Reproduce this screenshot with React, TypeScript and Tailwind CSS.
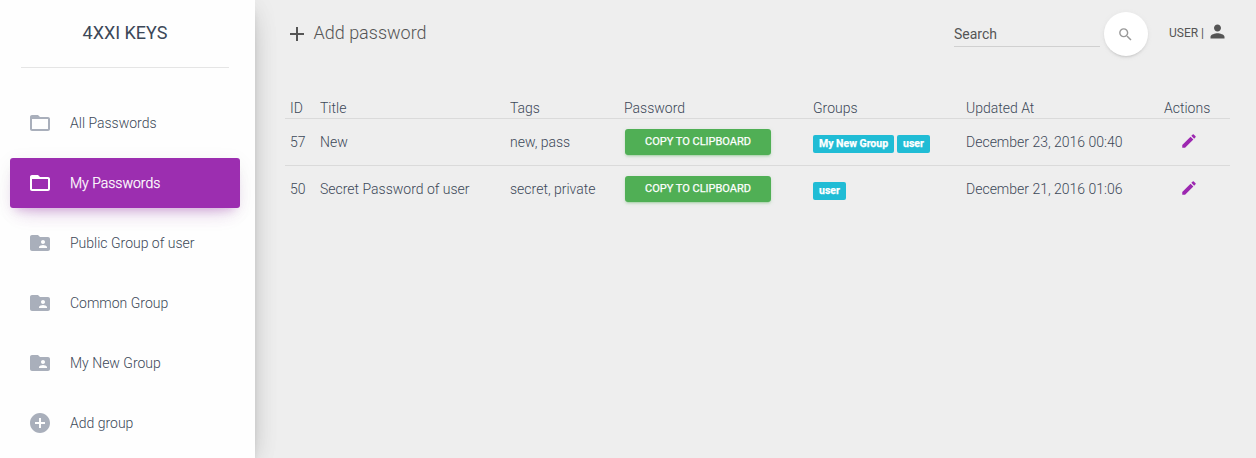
import { MdAdd, MdAddCircle, MdEdit, MdFolderOpen, MdFolderShared, MdPerson, MdSearch } from "react-icons/md";

const nav = [
  { label: "All Passwords", Icon: MdFolderOpen, active: false },
  { label: "My Passwords", Icon: MdFolderOpen, active: true },
  { label: "Public Group of user", Icon: MdFolderShared, active: false },
  { label: "Common Group", Icon: MdFolderShared, active: false },
  { label: "My New Group", Icon: MdFolderShared, active: false },
  { label: "Add group", Icon: MdAddCircle, active: false },
];

const rows = [
  { id: 57, title: "New", tags: "new, pass", groups: ["My New Group", "user"], updated: "December 23, 2016 00:40" },
  { id: 50, title: "Secret Password of user", tags: "secret, private", groups: ["user"], updated: "December 21, 2016 01:06" },
];

const columns = "grid grid-cols-[30px_190px_114px_189px_153px_193px_1fr] pl-[5px] border-b border-[#dadada]";

function Sidebar() {
  return (
    <aside className="relative z-10 w-[255px] shrink-0 bg-[#fefefe] shadow-[0_10px_30px_-12px_rgba(0,0,0,0.3),0_4px_25px_0_rgba(0,0,0,0.07),0_8px_10px_-5px_rgba(0,0,0,0.2)]">
      <div className="mr-[26px] ml-[21px] flex h-[68px] justify-center border-b border-[#e5e5e5] pt-[18px] text-[18px] leading-[30px] font-normal text-[#3c4858]">
        4XXI KEYS
      </div>
      <nav className="mt-[30px] flex flex-col gap-[10px] pr-[15px] pl-[10px]">
        {nav.map(({ label, Icon, active }) => (
          <a
            key={label}
            className={
              active
                ? "flex h-[50px] items-center rounded-[3px] bg-[#9c2eb0] pl-[18px] text-white shadow-[0_12px_20px_-10px_rgba(156,39,176,0.28),0_4px_20px_0_rgba(0,0,0,0.06),0_7px_8px_-5px_rgba(156,39,176,0.2)]"
                : "flex h-[50px] items-center rounded-[3px] pl-[18px] text-[#3c4858]"
            }
          >
            <Icon className={active ? "size-6 text-white" : "size-6 text-[#a9afbb]"} />
            <span
              className={
                active
                  ? "ml-[18px] text-[14px] leading-[30px] [-webkit-text-stroke:0.25px_white]"
                  : "ml-[18px] text-[14px] leading-[30px]"
              }
            >
              {label}
            </span>
          </a>
        ))}
      </nav>
    </aside>
  );
}

function Header() {
  return (
    <header className="flex h-[68px] items-start text-[#555]">
      <a className="flex items-center pt-[18px]">
        <MdAdd className="mt-[2px] size-6" />
        <span className="ml-[4.5px] text-[18px] leading-[30px]">Add password</span>
      </a>
      <div className="ml-auto flex">
        <div className="mt-[21px] h-[26px] w-[146px] border-b border-[#d0d0d0] text-[14px] leading-[26px] font-normal text-[#555]">
          Search
        </div>
        <button className="mt-[12px] ml-[4px] flex size-[44px] items-center justify-center rounded-full bg-white pr-px text-[#999] shadow-[0_2px_2px_0_rgba(153,153,153,0.14),0_3px_1px_-2px_rgba(153,153,153,0.2),0_1px_5px_0_rgba(153,153,153,0.12)]">
          <MdSearch className="size-[17px]" />
        </button>
        <div className="mt-[22px] ml-[21px] flex w-[61px] text-[12px] leading-[22px] font-normal">
          <span className="w-[37.5px] whitespace-nowrap">USER |</span>
          <MdPerson className="-mt-px size-[21px] shrink-0" />
        </div>
      </div>
    </header>
  );
}

export default function App() {
  return (
    <div className="flex h-[458px] w-[1256px] overflow-hidden bg-[#eee] font-['Roboto',sans-serif] font-light">
      <Sidebar />
      <main className="w-[1001px] pr-[26px] pl-[30px]">
        <Header />
        <section className="mt-[30px] text-[14px] text-[#3c4858]">
          <div className={`${columns} h-[21px] leading-[20px]`}>
            <span>ID</span>
            <span>Title</span>
            <span>Tags</span>
            <span>Password</span>
            <span>Groups</span>
            <span>Updated At</span>
            <span className="pl-[5px]">Actions</span>
          </div>
          {rows.map((row) => (
            <div key={row.id} className={`${columns} h-[47px] leading-[46px] last:border-b-0`}>
              <span>{row.id}</span>
              <span>{row.title}</span>
              <span>{row.tags}</span>
              <button className="mt-[10px] ml-px h-[26px] w-[146px] rounded-[3px] bg-[#50af55] text-[11px] leading-[25px] font-normal text-white shadow-[0_2px_2px_0_rgba(76,175,80,0.14),0_3px_1px_-2px_rgba(76,175,80,0.2),0_1px_5px_0_rgba(76,175,80,0.12)] [-webkit-text-stroke:0.25px_white]">
                <span className="block h-[26px]">COPY TO CLIPBOARD</span>
              </button>
              <span className="flex gap-[3px] pt-[16px]">
                {row.groups.map((group) => (
                  <span key={group} className="h-[18px] rounded-[2px] bg-[#20bcd5] px-[6px] text-[10.5px] leading-[17px] font-bold text-white [-webkit-text-stroke:0.25px_white]">
                    {group}
                  </span>
                ))}
              </span>
              <span>{row.updated}</span>
              <MdEdit className="mt-[12.5px] ml-[20.5px] size-[18px] text-[#9c27b0]" />
            </div>
          ))}
        </section>
      </main>
    </div>
  );
}
